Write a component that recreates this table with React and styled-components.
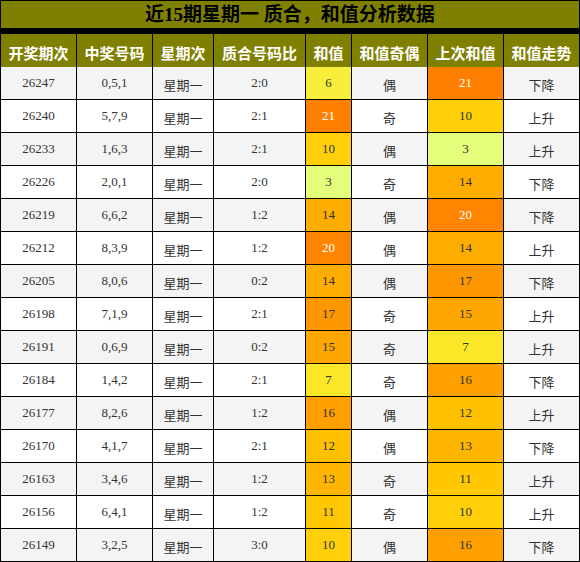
import React from "react";
import styled, { createGlobalStyle } from "styled-components";

const Global = createGlobalStyle`
  html, body { margin: 0; padding: 0; background: #fff; }
  body { font-family: "Liberation Serif", "Noto Sans CJK SC", serif; }
`;

const Grid = styled.div`
  display: grid;
  grid-template-columns: 75px 75px 60px 91px 45px 75px 75px 75px;
  grid-auto-rows: 32px;
  gap: 1px;
  padding: 1px;
  background: #000;
  width: 580px;
  box-sizing: border-box;
`;

const Title = styled.div`
  grid-column: 1 / -1;
  height: 27px;
  background: #808000;
  color: #000;
  font-weight: bold;
  font-size: 19px;
  display: flex;
  align-items: center;
  justify-content: center;
  line-height: 1;
`;

const Head = styled.div`
  height: 37px;
  background: #808000;
  color: #fff;
  font-weight: bold;
  font-size: 15px;
  font-family: "Noto Sans CJK SC", sans-serif;
  display: flex;
  align-items: center;
  justify-content: center;
`;

const Cell = styled.div`
  background: ${(p) => p.$bg || (p.$alt ? "#f4f4f4" : "#fff")};
  color: ${(p) => (p.$light ? "#fff" : "#333")};
  font-size: 13px;
  font-family: ${(p) =>
    p.$cjk ? '"Noto Sans CJK SC", sans-serif' : '"Liberation Serif", "Noto Sans CJK SC", serif'};
  display: flex;
  align-items: center;
  justify-content: center;
  padding-top: ${(p) => (p.$cjk ? "3px" : "0")};
  box-sizing: border-box;
`;

const colors = {
  3: "#e5ff7d",
  6: "#f7ef3b",
  7: "#fbe727",
  10: "#ffd00a",
  11: "#ffc800",
  12: "#ffc000",
  13: "#ffb600",
  14: "#ffae00",
  15: "#ffa700",
  16: "#ffa000",
  17: "#ff9800",
  20: "#ff8400",
  21: "#ff8000",
};

const rows = [
  ["26247", "0,5,1", "2:0", 6, "偶", 21, "下降"],
  ["26240", "5,7,9", "2:1", 21, "奇", 10, "上升"],
  ["26233", "1,6,3", "2:1", 10, "偶", 3, "上升"],
  ["26226", "2,0,1", "2:0", 3, "奇", 14, "下降"],
  ["26219", "6,6,2", "1:2", 14, "偶", 20, "下降"],
  ["26212", "8,3,9", "1:2", 20, "偶", 14, "上升"],
  ["26205", "8,0,6", "0:2", 14, "偶", 17, "下降"],
  ["26198", "7,1,9", "2:1", 17, "奇", 15, "上升"],
  ["26191", "0,6,9", "0:2", 15, "奇", 7, "上升"],
  ["26184", "1,4,2", "2:1", 7, "奇", 16, "下降"],
  ["26177", "8,2,6", "1:2", 16, "偶", 12, "上升"],
  ["26170", "4,1,7", "2:1", 12, "偶", 13, "下降"],
  ["26163", "3,4,6", "1:2", 13, "奇", 11, "上升"],
  ["26156", "6,4,1", "1:2", 11, "奇", 10, "上升"],
  ["26149", "3,2,5", "3:0", 10, "偶", 16, "下降"],
];

const heads = ["开奖期次", "中奖号码", "星期次", "质合号码比", "和值", "和值奇偶", "上次和值", "和值走势"];

export default function App() {
  return (
    <>
      <Global />
      <Grid>
        <Title>近15期星期一 质合，和值分析数据</Title>
        {heads.map((h) => (
          <Head key={h}>{h}</Head>
        ))}
        {rows.map((r, i) => {
          const alt = i % 2 === 0;
          const [issue, nums, ratio, sum, oe, prev, trend] = r;
          return (
            <React.Fragment key={issue}>
              <Cell $alt={alt}>{issue}</Cell>
              <Cell $alt={alt}>{nums}</Cell>
              <Cell $alt={alt} $cjk>星期一</Cell>
              <Cell $alt={alt}>{ratio}</Cell>
              <Cell $bg={colors[sum]} $light={sum >= 20}>{sum}</Cell>
              <Cell $alt={alt} $cjk>{oe}</Cell>
              <Cell $bg={colors[prev]} $light={prev >= 20}>{prev}</Cell>
              <Cell $alt={alt} $cjk>{trend}</Cell>
            </React.Fragment>
          );
        })}
      </Grid>
    </>
  );
}
